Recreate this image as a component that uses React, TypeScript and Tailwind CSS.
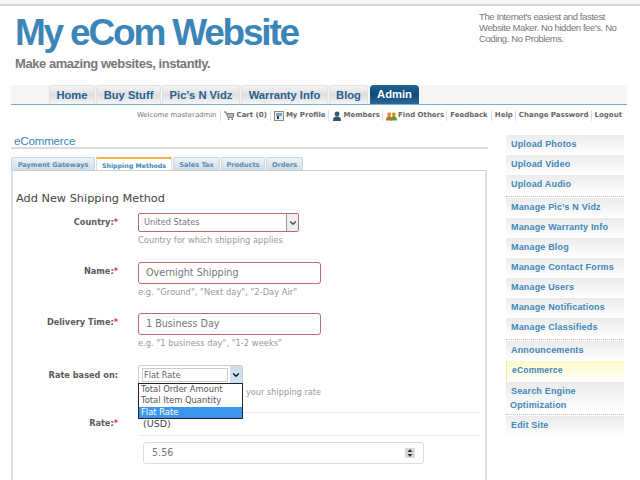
import { ChevronDown } from 'lucide-react';

const navTabs = [
    { label: 'Home', width: 'w-[46px]' },
    { label: 'Buy Stuff', width: 'w-[65px]' },
    { label: "Pic's N Vidz", width: 'w-[78px]' },
    { label: 'Warranty Info', width: 'w-[87px]' },
    { label: 'Blog', width: 'w-[39px]' },
];

const formTabs = [
    { label: 'Sales Tax', width: 'w-[47px]' },
    { label: 'Products', width: 'w-[44px]' },
    { label: 'Orders', width: 'w-[37px]' },
];

const sideGroups = [
    ['Upload Photos', 'Upload Video', 'Upload Audio'],
    [
        "Manage Pic's N Vidz",
        'Manage Warranty Info',
        'Manage Blog',
        'Manage Contact Forms',
        'Manage Users',
        'Manage Notifications',
        'Manage Classifieds',
    ],
];

function SideLink({ label }: { label: string }) {
    return (
        <a className="block h-[20px] bg-gradient-to-b from-[#ebebeb] to-white pt-[3px] pl-[5px] text-[9px] leading-[13px] font-bold tracking-[0.17px] whitespace-nowrap text-[#3f86b9]">
            {label}
        </a>
    );
}

function Label({ text, required, className }: { text: string; required?: boolean; className?: string }) {
    return (
        <div className={`w-[113px] shrink-0 pr-[8px] text-right font-['DejaVu_Sans'] text-[8.2px] font-bold text-[#5a5a5a] ${className ?? ''}`}>
            {text}
            {required && <span className="text-[#e33]">*</span>}
        </div>
    );
}

function Hint({ text }: { text: string }) {
    return <div className="mt-[2px] h-[12px] font-['DejaVu_Sans'] text-[8.35px] leading-[12px] text-[#999]">{text}</div>;
}

function TextField({ value }: { value: string }) {
    return (
        <div className="flex h-[22px] w-[183px] items-center rounded-[3px] border border-[#c26a6a] pl-[7px] font-['DejaVu_Sans'] text-[9.6px] text-[#777]">
            {value}
        </div>
    );
}

export default function App() {
    return (
        <div className="relative h-[480px] w-[640px] overflow-hidden bg-white font-['Liberation_Sans',sans-serif]">
            <div className="h-[6px] border-b-2 border-[#d5d5d5] bg-[#f6f6f6]" />

            {/* Header */}
            <div className="flex h-[79px]">
                <div className="w-[479px] pl-[15px]">
                    <div className="mt-[3px] text-[37px] leading-[48px] font-bold tracking-[-2.2px] text-[#3c85b8]">My eCom Website</div>
                    <div className="-mt-[1px] text-[13px] leading-[16px] font-bold tracking-[-0.45px] text-[#777]">Make amazing websites, instantly.</div>
                </div>
                <p className="mt-[5px] w-[145px] text-[9.5px] leading-[11px] tracking-[-0.4px] text-[#777]">
                    The Internet's easiest and fastest Website Maker. No hidden fee's. No Coding. No Problems.
                </p>
            </div>

            {/* Nav */}
            <div className="ml-[11px] flex h-[20px] w-[616px] gap-[1px] border-b border-[#7eacce] bg-[#f5f5f5] pl-[38px]">
                {navTabs.map((t) => (
                    <div
                        key={t.label}
                        className={`${t.width} shrink-0 rounded-t-[3px] border border-b-0 border-[#e2e2e2] bg-gradient-to-b from-[#f6f6f6] via-[#dedede] to-[#f5f5f5] text-center text-[11.2px] leading-[18px] font-bold text-[#27618f]`}
                    >
                        {t.label}
                    </div>
                ))}
                <div className="ml-[1px] w-[49px] shrink-0 rounded-t-[4px] bg-gradient-to-b from-[#1f6496] via-[#0f4a78] to-[#2a6a9b] text-center text-[11.2px] leading-[19px] font-bold text-white">
                    Admin
                </div>
            </div>

            {/* User bar */}
            <div className="mt-[4px] mr-[18px] flex h-[13px] items-center justify-end font-['DejaVu_Sans'] text-[7px] whitespace-nowrap text-[#666]">
                <span className="pr-[3px] text-[6.9px] text-[#777]">Welcome masteradmin</span>
                <span className="flex items-center border-l border-[#ddd] px-[3px] font-bold">
                    <svg viewBox="0 0 12 10" className="mr-[2px] h-[9px] w-[11px]">
                        <path d="M0 1h2l2 6h6l1-4H3" fill="#bbb" stroke="#666" strokeWidth="1" />
                        <circle cx="5" cy="9" r="1" fill="#666" />
                        <circle cx="9" cy="9" r="1" fill="#666" />
                    </svg>
                    Cart (0)
                </span>
                <span className="flex items-center border-l border-[#ddd] pr-[2px] pl-[3px] font-bold">
                    <svg viewBox="0 0 10 10" className="mr-[2px] h-[10px] w-[10px]">
                        <rect x="0.5" y="0.5" width="9" height="9" fill="#eee" stroke="#888" />
                        <rect x="2" y="2" width="6" height="3" fill="#7aa5c8" />
                        <rect x="3" y="5" width="2" height="3" fill="#333" />
                    </svg>
                    My Profile
                </span>
                <span className="flex items-center border-l border-[#ddd] pr-[2px] pl-[3px] font-bold">
                    <svg viewBox="0 0 10 10" className="mr-[2px] h-[10px] w-[10px]">
                        <circle cx="5" cy="3" r="2.4" fill="#33566f" />
                        <path d="M1 10c0-4 2-4.500 4-4.500S9 6 9 10z" fill="#33566f" />
                    </svg>
                    Members
                </span>
                <span className="flex items-center border-l border-[#ddd] pr-[2px] pl-[3px] font-bold">
                    <svg viewBox="0 0 12 10" className="mr-[1px] h-[10px] w-[11px]">
                        <circle cx="3.500" cy="3" r="2" fill="#d98a2b" />
                        <circle cx="8.500" cy="3" r="2" fill="#d98a2b" />
                        <path d="M0 10c0-4 2-5 3.500-5S7 6 7 10z" fill="#c9702a" />
                        <path d="M5 10c0-4 2-5 3.500-5S12 6 12 10z" fill="#5f9e3f" />
                    </svg>
                    Find Others
                </span>
                <span className="border-l border-[#ddd] px-[3px] font-bold">Feedback</span>
                <span className="border-l border-[#ddd] pr-[2px] pl-[3px] font-bold">Help</span>
                <span className="border-l border-[#ddd] pr-[2px] pl-[3px] font-bold">Change Password</span>
                <span className="border-l border-[#ddd] pl-[3px] font-bold">Logout</span>
            </div>

            {/* Main */}
            <div className="flex pl-[11px]">
                <div className="w-[477px] shrink-0">
                    <div className="h-[27px] border-b-2 border-[#dcdcdc] pt-[12px] pl-[3px] text-[11.6px] leading-[14px] tracking-[-0.2px] text-[#3c85b8]">
                        eCommerce
                    </div>

                    {/* Form tabs */}
                    <div className="mt-[8px] flex h-[13px] gap-[1px] font-['DejaVu_Sans'] text-[6.6px] font-bold whitespace-nowrap text-[#5a8bb0]">
                        <div className="w-[84px] rounded-t-[2px] border border-b-0 border-[#c9d6e0] bg-gradient-to-b from-[#eef3f7] to-[#cfdde8] text-center leading-[14px]">
                            Payment Gateways
                        </div>
                        <div className="w-[76px] border-x border-t-2 border-x-[#ddd] border-t-[#f0b04a] bg-white text-center text-[6.3px] leading-[13px] text-[#3f86b9]">
                            Shipping Methods
                        </div>
                        {formTabs.map((t) => (
                            <div
                                key={t.label}
                                className={`${t.width} rounded-t-[2px] border border-b-0 border-[#c9d6e0] bg-gradient-to-b from-[#eef3f7] to-[#cfdde8] text-center leading-[14px]`}
                            >
                                {t.label}
                            </div>
                        ))}
                    </div>

                    {/* Panel */}
                    <div className="h-[400px] w-[476px] border-x-2 border-t border-[#dfdfdf] border-t-[#cfcfcf]">
                        <div className="mt-[21px] ml-[3px] font-['DejaVu_Sans'] text-[11.3px] leading-[14px] text-[#444]">
                            Add New Shipping Method
                        </div>

                        <div className="mt-[7px] flex">
                            <Label text="Country:" required className="pt-[3px]" />
                            <div className="ml-[12px]">
                                <div className="flex h-[19px] w-[161px] items-center justify-between rounded-[2px] border border-[#b96c6c] font-['DejaVu_Sans'] text-[8.2px] text-[#777]">
                                    <span className="pl-[5px]">United States</span>
                                    <span className="flex h-full w-[12px] items-center justify-center border-l border-[#999] bg-[#eee]">
                                        <ChevronDown size={10} strokeWidth={3} className="text-[#444]" />
                                    </span>
                                </div>
                                <Hint text="Country for which shipping applies" />
                            </div>
                        </div>

                        <div className="mt-[16px] flex">
                            <Label text="Name:" required className="pt-[3px]" />
                            <div className="ml-[12px]">
                                <TextField value="Overnight Shipping" />
                                <Hint text={'e.g. "Ground", "Next day", "2-Day Air"'} />
                            </div>
                        </div>

                        <div className="mt-[15px] flex">
                            <Label text="Delivery Time:" required className="pt-[3px]" />
                            <div className="ml-[12px]">
                                <TextField value="1 Business Day" />
                                <Hint text={'e.g. "1 business day", "1-2 weeks"'} />
                            </div>
                        </div>

                        <div className="relative mt-[16px] flex h-[48px]">
                            <Label text="Rate based on:" className="pt-[4px]" />
                            <div className="ml-[12px] w-[343px] border-b border-[#eee]">
                                <div className="flex h-[19px] w-[105px] items-center rounded-[2px] border border-[#ccc] pl-[3px]">
                                    <div className="h-[14px] w-[88px] border border-[#ccc] pl-[1px] font-['DejaVu_Sans'] text-[8.2px] leading-[12px] text-[#666]">Flat Rate</div>
                                    <span className="ml-[2px] flex h-[17px] w-[12px] items-center justify-center bg-[#cfe0f2]">
                                        <ChevronDown size={10} strokeWidth={3} className="text-[#111]" />
                                    </span>
                                </div>
                                <div className="mt-[2px] h-[13px] pl-[108px] font-['DejaVu_Sans'] text-[8.2px] leading-[13px] text-[#999]">your shipping rate</div>

                                {/* Open dropdown */}
                                <div className="absolute top-[18px] left-[125px] z-10 h-[36px] w-[105px] border border-[#222] bg-white font-['DejaVu_Sans'] text-[8.4px] leading-[11.4px] text-[#555]">
                                    <div className="pl-[2px]">Total Order Amount</div>
                                    <div className="pl-[2px]">Total Item Quantity</div>
                                    <div className="bg-[#3b96ee] pl-[2px] text-white">Flat Rate</div>
                                </div>
                            </div>
                        </div>

                        <div className="flex">
                            <Label text="Rate:" required className="pt-[4px]" />
                            <div className="ml-[12px] w-[343px]">
                                <div className="h-[23px] border-b border-[#eee] pt-[4px] pl-[5px] font-['DejaVu_Sans'] text-[9.5px] leading-[14px] font-medium text-[#444]">(USD)</div>
                                <div className="mt-[6px] ml-[5px] flex h-[22px] w-[281px] items-center justify-between rounded-[3px] border border-[#ddd] px-[8px] font-['DejaVu_Sans'] text-[9.6px] text-[#777]">
                                    5.56
                                    <svg viewBox="0 0 10 10" className="h-[10px] w-[10px]">
                                        <rect width="10" height="10" fill="#d8d8d8" />
                                        <path d="M5 1l2.500 3h-5zM5 9l2.500-3h-5z" fill="#333" />
                                    </svg>
                                </div>
                            </div>
                        </div>
                    </div>
                </div>

                {/* Sidebar */}
                <div className="mt-[13px] ml-[18px] w-[118px] shrink-0">
                    {sideGroups.map((group, i) => (
                        <div key={i} className={i === 0 ? '' : 'mt-[1px] border-t border-dotted border-[#bbb] pt-[1px]'}>
                            {group.map((l) => (
                                <SideLink key={l} label={l} />
                            ))}
                        </div>
                    ))}
                    <div className="mt-[1px] border-t border-dotted border-[#bbb] pt-[1px]">
                        <SideLink label="Announcements" />
                        <a className="block h-[21px] border-l border-[#f5eb9a] bg-gradient-to-b from-[#fff9c8] to-white pt-[3px] pl-[5px] text-[8.6px] leading-[13px] font-bold tracking-[0.17px] text-[#3f86b9]">
                            eCommerce
                        </a>
                        <a className="block h-[31px] bg-gradient-to-b from-[#ebebeb] to-white pt-[2px] pl-[5px] text-[9px] leading-[14px] font-bold tracking-[0.17px] text-[#3f86b9]">
                            Search Engine
                            <br />
                            <span className="-ml-[1px]">Optimization</span>
                        </a>
                    </div>
                    <div className="mt-[1px] border-t border-dotted border-[#bbb] pt-[1px]">
                        <SideLink label="Edit Site" />
                    </div>
                </div>
            </div>
        </div>
    );
}
